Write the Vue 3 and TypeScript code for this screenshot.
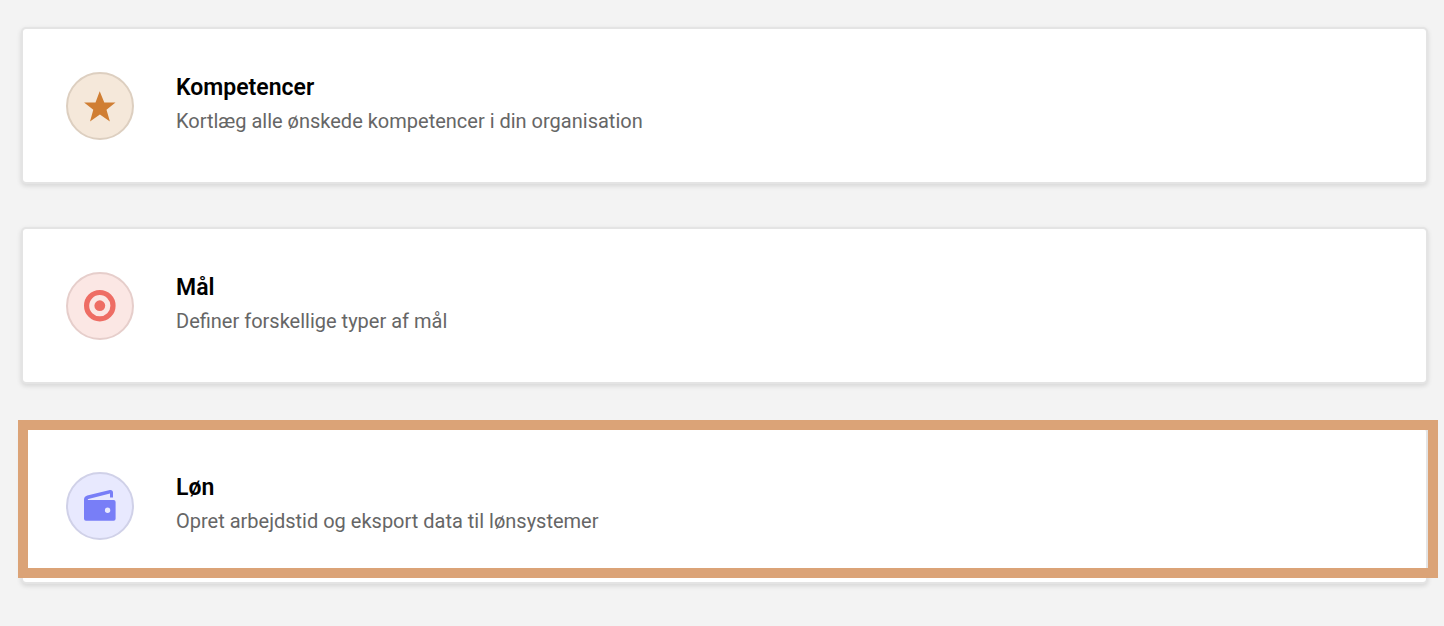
<script setup lang="ts">
type IconName = 'star' | 'target' | 'wallet'

interface SettingsItem {
  id: string
  icon: IconName
  title: string
  description: string
  highlighted?: boolean
}

const items: SettingsItem[] = [
  {
    id: 'kompetencer',
    icon: 'star',
    title: 'Kompetencer',
    description: 'Kortlæg alle ønskede kompetencer i din organisation',
  },
  {
    id: 'maal',
    icon: 'target',
    title: 'Mål',
    description: 'Definer forskellige typer af mål',
  },
  {
    id: 'loen',
    icon: 'wallet',
    title: 'Løn',
    description: 'Opret arbejdstid og eksport data til lønsystemer',
    highlighted: true,
  },
]
</script>

<template>
  <main class="settings">
    <a
      v-for="item in items"
      :key="item.id"
      :href="`#${item.id}`"
      class="card"
      :class="{ highlighted: item.highlighted }"
    >
      <span class="badge" :class="item.icon">
        <svg v-if="item.icon === 'star'" viewBox="0 0 32 32" aria-hidden="true">
          <path
            fill="currentColor"
            d="M15.7 1.2 20.3 12.6H31.5L22.5 19.8 25.9 31.4 15.9 24.6 6 31.4 9.3 19.8 0.1 12.6H11.5Z"
          />
        </svg>
        <svg v-else-if="item.icon === 'target'" viewBox="0 0 32 32" aria-hidden="true">
          <circle cx="15.8" cy="15.7" r="13.2" fill="none" stroke="currentColor" stroke-width="5.2" />
          <circle cx="15.8" cy="15.7" r="5.4" fill="currentColor" />
        </svg>
        <svg v-else viewBox="0 0 32 32" aria-hidden="true">
          <path
            fill="currentColor"
            fill-rule="evenodd"
            d="M4.2 10H29.6A2 2 0 0 1 31.6 12V28.7A2 2 0 0 1 29.6 30.7H2A2 2 0 0 1 0 28.7V9.7C0 7.5 1.1 6.2 3.2 5.5L25.9 0.1C27.8 -0.2 29 0.8 29 2.6V7.6H26V3.6L4.4 9.1C3.7 9.4 3.6 10 4.2 10ZM23.6 17.6A2.7 2.7 0 1 0 23.6 23 2.7 2.7 0 0 0 23.6 17.6Z"
          />
        </svg>
      </span>
      <span class="text">
        <strong class="title">{{ item.title }}</strong>
        <span class="description">{{ item.description }}</span>
      </span>
    </a>
  </main>
</template>

<style>
body {
  margin: 0;
  background: #f3f3f3;
}
</style>

<style scoped>
.settings {
  display: flex;
  flex-direction: column;
  gap: 43px;
  padding: 27px 16px 43px 21px;
  font-family: Roboto, 'Liberation Sans', sans-serif;
}

.card {
  position: relative;
  display: flex;
  align-items: flex-start;
  gap: 42px;
  padding: 43px 43px 42px;
  border: 2px solid #e4e4e4;
  border-radius: 5px;
  background: #fff;
  background-clip: padding-box;
  box-shadow: 0 2px 5px rgba(0, 0, 0, 0.12);
  color: #000;
  text-decoration: none;
}

.highlighted::after {
  content: '';
  position: absolute;
  inset: -9px -12px 4px -5px;
  border: 10px solid #dba377;
}

.badge {
  display: flex;
  flex: none;
  align-items: center;
  justify-content: center;
  box-sizing: border-box;
  width: 68px;
  height: 68px;
  border: 2px solid;
  border-radius: 50%;
}

.badge svg {
  width: 32px;
  height: 32px;
  overflow: visible;
  color: var(--icon);
}

.star {
  --icon: #d07e33;
  border-color: #ddcfc0;
  background: #f5e8da;
}

.target {
  --icon: #ee6d64;
  border-color: #e6cecb;
  background: #fbe7e4;
}

.wallet {
  --icon: #787ef7;
  border-color: #d0d1e8;
  background: #e8e9fe;
}

.text {
  display: flex;
  flex-direction: column;
  gap: 3px;
}

.title {
  font-size: 23px;
  font-weight: 600;
  line-height: 32px;
}

.description {
  color: #666;
  font-size: 20px;
  line-height: 28px;
}
</style>
